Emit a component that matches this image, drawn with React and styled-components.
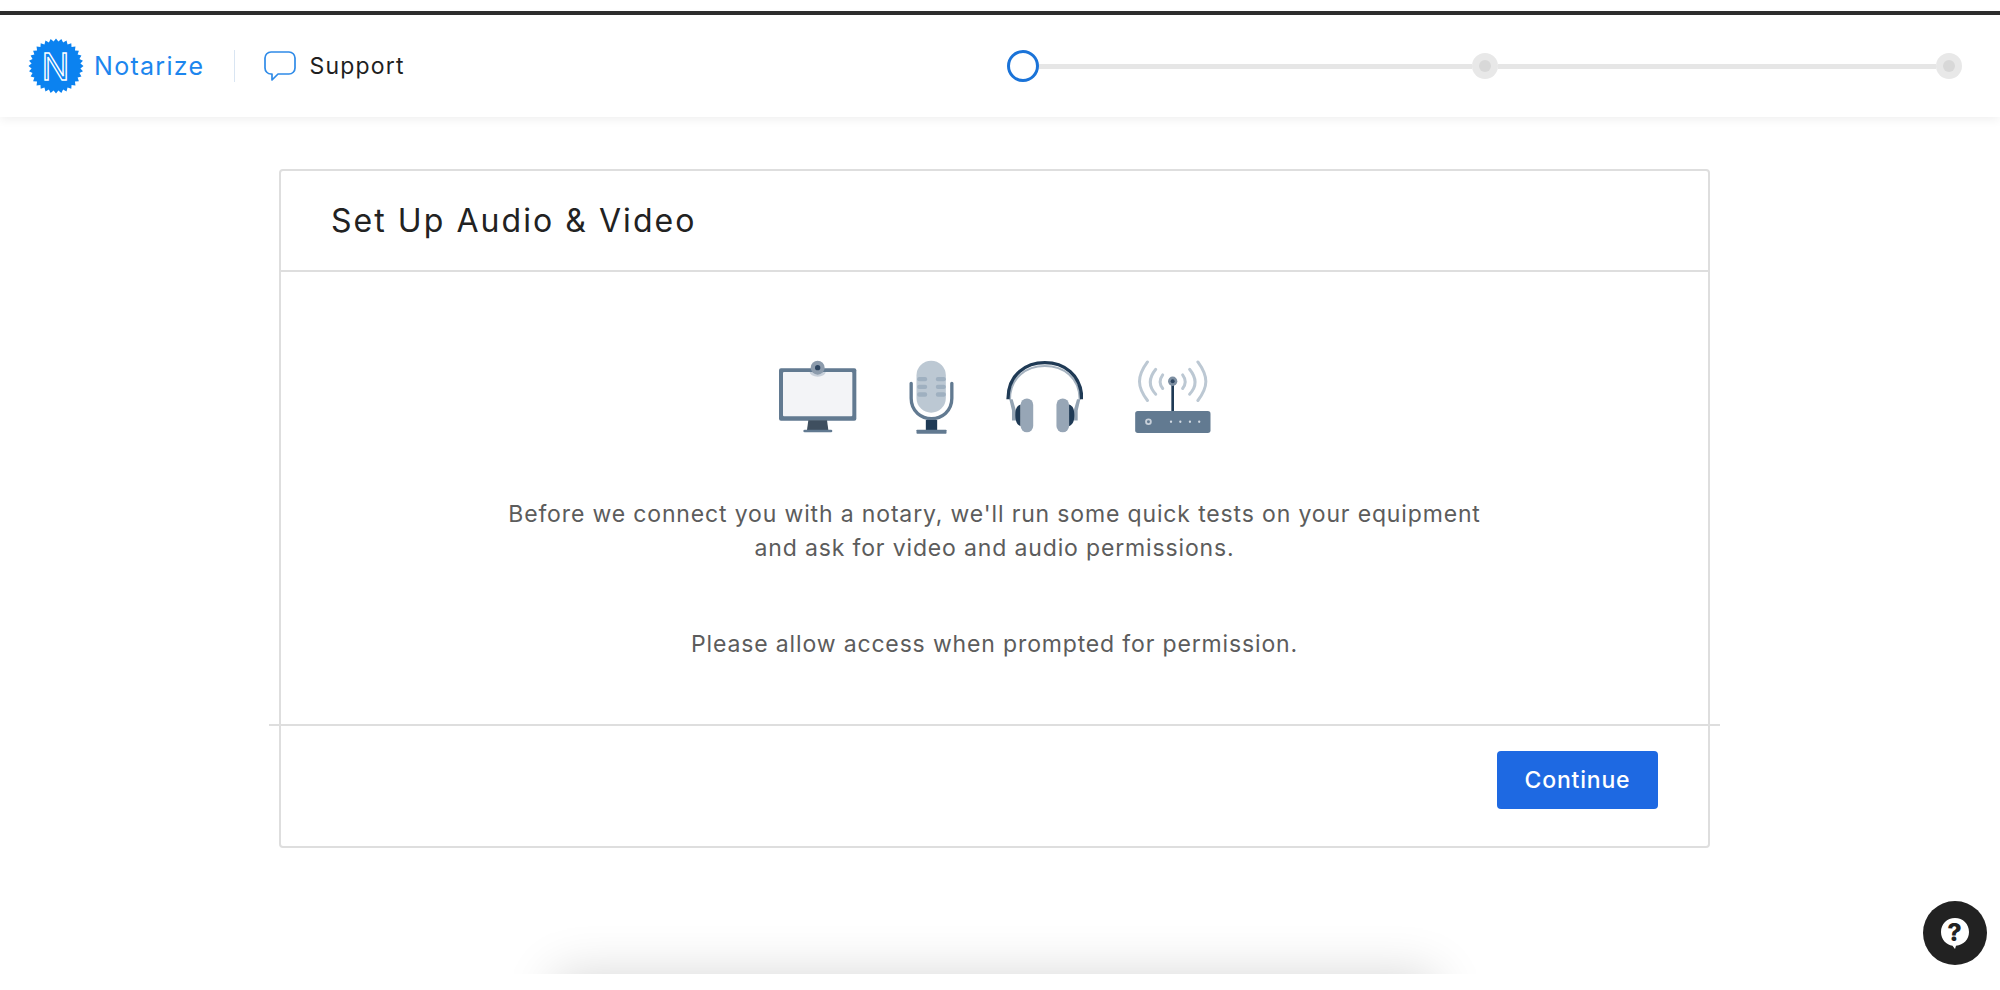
import React from "react";
import styled, { createGlobalStyle } from "styled-components";

const Global = createGlobalStyle`
  html, body { margin: 0; padding: 0; background: #fff; }
  body { font-family: Inter, "Liberation Sans", sans-serif; }
`;

const Page = styled.div`
  position: relative;
  height: 990px;
  overflow: hidden;
  background: #fff;
  padding-top: 11px;
  box-sizing: border-box;
`;
const DarkBar = styled.div`
  height: 4px;
  background: #2e2e2e;
`;
const Header = styled.header`
  height: 102px;
  display: flex;
  align-items: center;
  padding: 0 38px 0 28px;
  background: #fff;
  box-shadow: 0 2px 10px rgba(0, 0, 0, 0.07);
`;
const Brand = styled.div`
  display: flex;
  align-items: center;
  gap: 10px;
  color: #1c86ee;
  font-size: 25px;
  letter-spacing: 1.3px;
`;
const Separator = styled.div`
  width: 1px;
  height: 32px;
  background: #d9e5f2;
  margin: 0 29px 0 30px;
`;
const SupportLink = styled.div`
  display: flex;
  align-items: center;
  gap: 13px;
  color: #1f1f1f;
  font-size: 23px;
  letter-spacing: 1.2px;
`;
const Stepper = styled.div`
  display: flex;
  align-items: center;
  margin-left: auto;
  width: 955px;
`;
const ActiveStep = styled.div`
  width: 32px;
  height: 32px;
  box-sizing: border-box;
  border: 3px solid #1a73d8;
  border-radius: 50%;
  flex: none;
`;
const StepLine = styled.div`
  flex: ${(p) => (p.$width ? `0 0 ${p.$width}px` : "1")};
  height: 5px;
  background: #e6e6e6;
`;
const Step = styled.div`
  width: 26px;
  height: 26px;
  border-radius: 50%;
  background: #e8e8e8;
  flex: none;
  display: flex;
  align-items: center;
  justify-content: center;
  &::after {
    content: "";
    width: 12px;
    height: 12px;
    border-radius: 50%;
    background: #d8d8d8;
  }
`;
const Card = styled.main`
  box-sizing: border-box;
  width: 1431px;
  height: 679px;
  margin: 52px 0 0 279px;
  border: 2px solid #dedede;
  border-radius: 4px;
  background: #fff;
  display: flex;
  flex-direction: column;
`;
const CardHeader = styled.div`
  height: 99px;
  display: flex;
  align-items: center;
  padding-left: 50px;
  border-bottom: 2px solid #dedede;
  flex: none;
`;
const Title = styled.h1`
  margin: 0;
  font-size: 32px;
  font-weight: 400;
  letter-spacing: 2.05px;
  color: #222;
`;
const CardBody = styled.div`
  flex: 1;
  display: flex;
  flex-direction: column;
  align-items: center;
  padding-top: 88px;
`;
const Icons = styled.div`
  display: flex;
  align-items: flex-start;
  gap: 52px;
  height: 74px;
`;
const Copy = styled.p`
  margin: 0;
  text-align: center;
  color: #5c5c5c;
  font-size: 23px;
  letter-spacing: 0.85px;
  line-height: 34px;
  margin-top: ${(p) => p.$top}px;
`;
const Rule = styled.div`
  height: 2px;
  background: #dedede;
  margin: 0 -12px;
  flex: none;
`;
const CardFooter = styled.div`
  height: 120px;
  display: flex;
  justify-content: flex-end;
  align-items: flex-start;
  padding: 25px 50px 0 0;
  box-sizing: border-box;
  flex: none;
`;
const PrimaryButton = styled.button`
  width: 161px;
  height: 58px;
  border: 0;
  border-radius: 4px;
  background: #1e69e2;
  color: #fff;
  font: 500 23px Inter, "Liberation Sans", sans-serif;
  letter-spacing: 0.8px;
`;
const HelpButton = styled.div`
  position: absolute;
  left: 1923px;
  top: 901px;
  width: 64px;
  height: 64px;
  border-radius: 50%;
  background: #222;
  display: flex;
  align-items: center;
  justify-content: center;
`;
const BottomGlow = styled.div`
  position: absolute;
  left: 480px;
  top: 900px;
  width: 1040px;
  height: 74px;
  overflow: hidden;
  &::before {
    content: "";
    position: absolute;
    left: 75px;
    right: 85px;
    top: 74px;
    height: 200px;
    box-shadow: 0 0 48px rgba(0, 0, 0, 0.16);
  }
`;

const starPoints = (() => {
  const pts = [];
  const n = 32;
  for (let i = 0; i < n * 2; i++) {
    const r = i % 2 ? 24.5 : 27.5;
    const a = (Math.PI * i) / n;
    pts.push(`${(28 + r * Math.sin(a)).toFixed(2)},${(28 - r * Math.cos(a)).toFixed(2)}`);
  }
  return pts.join(" ");
})();

const LogoMark = () => (
  <svg width="56" height="56" viewBox="0 0 56 56">
    <polygon points={starPoints} fill="#0b82f0" />
    <text x="28" y="41.500" textAnchor="middle" fontFamily="Liberation Sans, sans-serif" fontSize="38" fill="#0b82f0" stroke="#fff" strokeWidth="1.4">N</text>
  </svg>
);
const ChatIcon = () => (
  <svg width="32" height="30" viewBox="0 0 32 30" fill="none">
    <path d="M7 1h18a6 6 0 0 1 6 6v10a6 6 0 0 1-6 6H14l-6 6v-6H7a6 6 0 0 1-6-6V7a6 6 0 0 1 6-6z" stroke="#2f8be8" strokeWidth="1.7" strokeLinejoin="round" />
  </svg>
);
const MonitorIcon = () => (
  <svg width="78" height="74" viewBox="88 60 234 222">
    <rect x="88" y="85" width="232" height="157" rx="6" fill="#627a91" />
    <rect x="100" y="96" width="208" height="133" rx="3" fill="#f3f4f7" />
    <path d="M180 96a24 14 0 0 0 48 0z" fill="#c8d0da" />
    <circle cx="204" cy="83" r="21" fill="#8c9bac" />
    <circle cx="204" cy="83" r="8" fill="#2d4560" />
    <path d="M176 241h56l4 29h-64z" fill="#3f4f5f" />
    <rect x="161" y="269" width="87" height="8" rx="4" fill="#627a91" />
  </svg>
);
const MicIcon = () => (
  <svg width="45" height="74" viewBox="478 60 134 222">
    <rect x="500" y="62" width="88" height="156" rx="44" fill="#bcc8d3" />
    {[111, 134, 157].map((y) => (
      <g key={y} fill="#9fb0c0">
        <rect x="502" y={y} width="30" height="13" rx="6" />
        <rect x="558" y={y} width="30" height="13" rx="6" />
      </g>
    ))}
    <path d="M484 130V175C484 215 515 236 545 236C575 236 606 215 606 175V130" fill="none" stroke="#627a91" strokeWidth="10" strokeLinecap="round" />
    <rect x="528" y="240" width="34" height="30" fill="#1f3a55" />
    <rect x="500" y="269" width="90" height="12" rx="2" fill="#627a91" />
  </svg>
);
const HeadphonesIcon = () => (
  <svg width="77" height="73" viewBox="48 60 232 220">
    <path d="M60 180C60 112 110 78 165 78C220 78 270 112 270 180" fill="none" stroke="#a5b2bf" strokeWidth="6" />
    <path d="M54 178C54 102 110 68 165 68C220 68 276 102 276 178" fill="none" stroke="#1f3a55" strokeWidth="10" />
    <path d="M58 178L66 212V242H78V212L68 178zM272 178L264 212V242H252V212L262 178z" fill="#93a3b3" />
    <path d="M92 194C80 198 76 208 76 226S80 254 92 260zM238 194C250 198 254 208 254 226S250 254 238 260z" fill="#1f3a55" />
    <rect x="92" y="176" width="38" height="102" rx="19" fill="#97a6b6" />
    <rect x="200" y="176" width="38" height="102" rx="19" fill="#97a6b6" />
  </svg>
);
const RouterIcon = () => (
  <svg width="76" height="73" viewBox="435 60 228 220">
    <g fill="none" stroke="#bcc8d3" strokeWidth="9" strokeLinecap="round">
      <path d="M472 66C440 110 440 140 472 182" />
      <path d="M497 88C475 115 475 140 497 163" />
      <path d="M518 105C507 120 507 132 518 146" />
      <path d="M624 66C656 110 656 140 624 182" />
      <path d="M599 88C621 115 621 140 599 163" />
      <path d="M578 105C589 120 589 132 578 146" />
    </g>
    <rect x="544" y="125" width="8" height="92" fill="#1f3a55" />
    <circle cx="548" cy="124" r="14" fill="#7d8fa2" />
    <circle cx="548" cy="124" r="6" fill="#2d4560" />
    <rect x="435" y="214" width="227" height="66" rx="8" fill="#627a91" />
    <circle cx="475" cy="246" r="10" fill="#c8d0da" />
    <circle cx="475" cy="246" r="4.5" fill="#627a91" />
    {[543, 571, 600, 628].map((x) => (
      <circle key={x} cx={x} cy="246" r="3.5" fill="#d4dbe3" />
    ))}
  </svg>
);
const HelpIcon = () => (
  <svg width="30" height="32" viewBox="0 0 30 32">
    <path d="M15 1C7 1 1 7 1 15c0 7.500 5.500 13 11.500 13.800L15 32l1-3.200C23.500 28 29 22.500 29 15 29 7 23 1 15 1z" fill="#fff" />
    <text x="14.500" y="24" textAnchor="middle" fontFamily="Inter, sans-serif" fontWeight="800" fontSize="25" fill="#222">?</text>
  </svg>
);

export default function App() {
  return (
    <>
      <Global />
      <Page>
        <DarkBar />
        <Header>
          <Brand>
            <LogoMark />
            Notarize
          </Brand>
          <Separator />
          <SupportLink>
            <ChatIcon />
            Support
          </SupportLink>
          <Stepper>
            <ActiveStep />
            <StepLine $width={433} />
            <Step />
            <StepLine />
            <Step />
          </Stepper>
        </Header>
        <Card>
          <CardHeader>
            <Title>Set Up Audio &amp; Video</Title>
          </CardHeader>
          <CardBody>
            <Icons>
              <MonitorIcon />
              <MicIcon />
              <HeadphonesIcon />
              <RouterIcon />
            </Icons>
            <Copy $top={63}>
              Before we connect you with a notary, we'll run some quick tests on your equipment
              <br />
              and ask for video and audio permissions.
            </Copy>
            <Copy $top={62}>Please allow access when prompted for permission.</Copy>
          </CardBody>
          <Rule />
          <CardFooter>
            <PrimaryButton>Continue</PrimaryButton>
          </CardFooter>
        </Card>
        <BottomGlow />
        <HelpButton>
          <HelpIcon />
        </HelpButton>
      </Page>
    </>
  );
}
